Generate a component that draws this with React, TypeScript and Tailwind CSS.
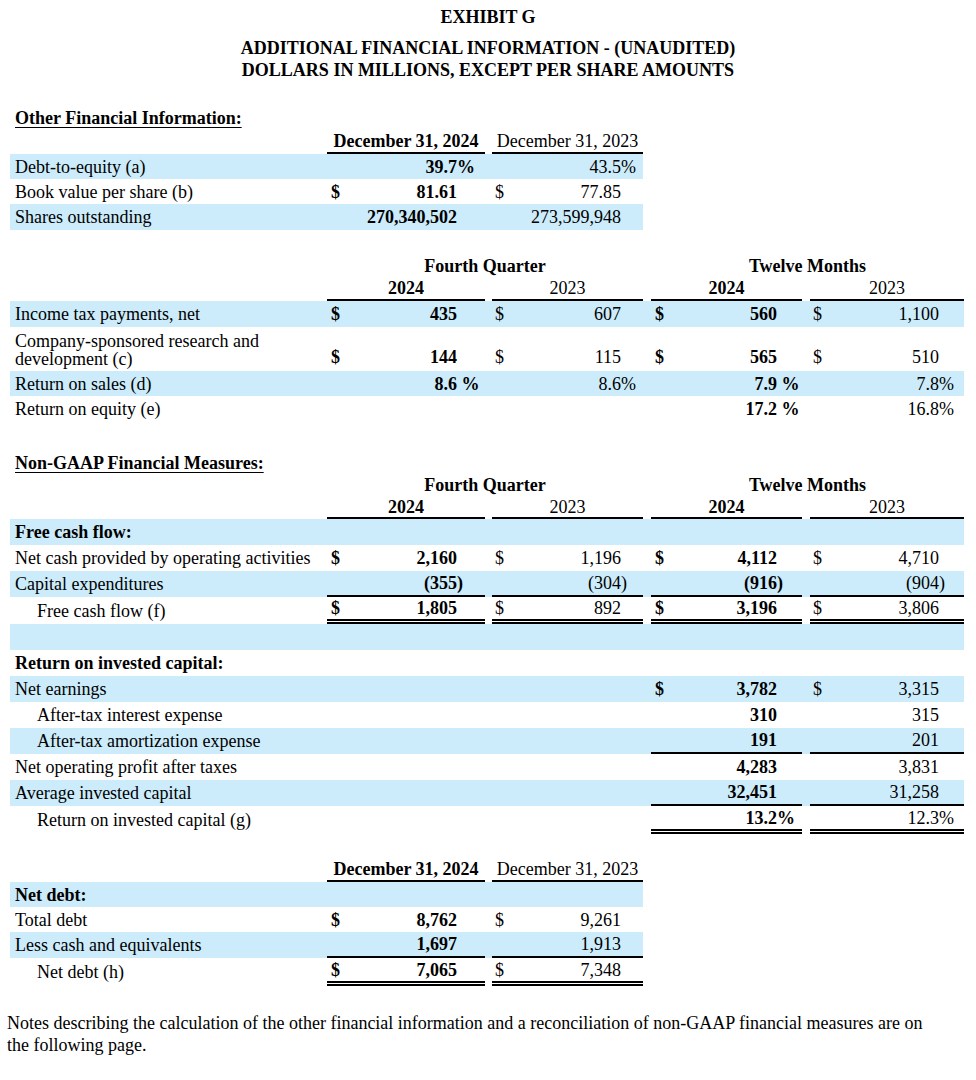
import React from "react";

type Cell = { d?: boolean; v?: string; pre?: string; suf?: string; line?: "s" | "d" } | null;

const BLUE = "bg-[#ccecfb]";
const COLW = ["w-[158px]", "w-[151px] ml-[7px]", "w-[151px] ml-[8px]", "w-[154px] ml-[8px]"];
const PR = ["pr-[28px]", "pr-[22px]", "pr-[25px]", "pr-[25px]"];
const PL = ["pl-[4px]", "pl-[3px]", "pl-[4px]", "pl-[3px]"];
const BOLD = [true, false, true, false];

function DataCell({ c, i, tall }: { c: Cell; i: number; tall?: boolean }) {
  const line =
    c?.line === "s"
      ? "border-b-2 border-black"
      : c?.line === "d"
      ? "border-b-[5px] border-double border-black"
      : "";
  return (
    <div
      className={`${COLW[i]} ${PL[i]} ${PR[i]} ${line} h-full flex ${tall ? "items-end pb-[3px]" : "items-center"} justify-between ${
        BOLD[i] ? "font-bold" : ""
      }`}
    >
      <span>{c?.d ? "$" : ""}</span>
      <span className="whitespace-nowrap">
        {c?.pre}
        {c?.v}
        <span className="inline-block w-0 whitespace-pre">{c?.suf}</span>
      </span>
    </div>
  );
}

function Row({
  label,
  cells,
  blue,
  h = "h-[26px]",
  indent,
  bold,
  wide = true,
  tall,
}: {
  label?: React.ReactNode;
  cells?: Cell[];
  blue?: boolean;
  h?: string;
  indent?: boolean;
  bold?: boolean;
  wide?: boolean;
  tall?: boolean;
}) {
  return (
    <div className={`flex ${h} ${blue ? BLUE : ""} ${wide ? "w-[954px]" : "w-[633px]"}`}>
      <div
        className={`w-[317px] shrink-0 flex ${tall ? "items-end pb-[3px] leading-[18px]" : "items-center"} ${
          indent ? "pl-[27px]" : "pl-[5px]"
        } ${bold ? "font-bold" : ""}`}
      >
        {label}
      </div>
      {cells && cells.map((c, i) => <DataCell key={i} c={c} i={i} tall={tall} />)}
    </div>
  );
}

function YearHeader({ labels, h = "h-[24px]" }: { labels: string[]; h?: string }) {
  return (
    <div className={`flex ${h}`}>
      <div className="w-[317px] shrink-0" />
      {labels.map((l, i) => (
        <div
          key={i}
          className={`${COLW[i]} border-b-2 border-black flex items-center justify-center whitespace-nowrap ${
            BOLD[i] ? "font-bold" : ""
          }`}
        >
          {l}
        </div>
      ))}
    </div>
  );
}

function GroupHeader() {
  return (
    <div className="flex h-[22px] items-center font-bold">
      <div className="w-[317px] shrink-0" />
      <div className="w-[316px] text-center">Fourth Quarter</div>
      <div className="w-[313px] ml-[8px] text-center">Twelve Months</div>
    </div>
  );
}

export default function App() {
  return (
    <div className="w-[976px] min-h-[1080px] bg-white text-black font-['Liberation_Serif','Times_New_Roman',serif] text-[18px] leading-[22px]">
      <div className="pt-[6px] text-center font-bold">
        <div>EXHIBIT G</div>
        <div className="mt-[9px]">ADDITIONAL FINANCIAL INFORMATION - (UNAUDITED)</div>
        <div>DOLLARS IN MILLIONS, EXCEPT PER SHARE AMOUNTS</div>
      </div>

      <div className="ml-[10px]">
        {/* Other Financial Information */}
        <div className="mt-[26px] pl-[5px] font-bold">
          <span className="underline underline-offset-[3px]">Other Financial Information:</span>
        </div>
        <YearHeader labels={["December 31, 2024", "December 31, 2023"]} h="h-[25px]" />
        <Row wide={false} blue h="h-[25px]" label="Debt-to-equity (a)" cells={[{ v: "39.7", suf: "%" }, { v: "43.5", suf: "%" }]} />
        <Row wide={false} h="h-[25px]" label="Book value per share (b)" cells={[{ d: true, v: "81.61" }, { d: true, v: "77.85" }]} />
        <Row wide={false} blue label="Shares outstanding" cells={[{ v: "270,340,502" }, { v: "273,599,948" }]} />

        {/* Second table */}
        <div className="mt-[25px]">
          <GroupHeader />
          <YearHeader labels={["2024", "2023", "2024", "2023"]} />
        </div>
        <Row
          blue
          label="Income tax payments, net"
          cells={[
            { d: true, v: "435" },
            { d: true, v: "607" },
            { d: true, v: "560" },
            { d: true, v: "1,100" },
          ]}
        />
        <Row
          tall
          h="h-[44px]"
          label={
            <span>
              Company-sponsored research and
              <br />
              development (c)
            </span>
          }
          cells={[
            { d: true, v: "144" },
            { d: true, v: "115" },
            { d: true, v: "565" },
            { d: true, v: "510" },
          ]}
        />
        <Row
          blue
          h="h-[25px]"
          label="Return on sales (d)"
          cells={[
            { v: "8.6", suf: " %" },
            { v: "8.6", suf: "%" },
            { v: "7.9", suf: " %" },
            { v: "7.8", suf: "%" },
          ]}
        />
        <Row
          h="h-[25px]"
          label="Return on equity (e)"
          cells={[null, null, { v: "17.2", suf: " %" }, { v: "16.8", suf: "%" }]}
        />

        {/* Non-GAAP */}
        <div className="mt-[31px] pl-[5px] font-bold">
          <span className="underline underline-offset-[3px]">Non-GAAP Financial Measures:</span>
        </div>
        <GroupHeader />
        <YearHeader labels={["2024", "2023", "2024", "2023"]} h="h-[23px]" />
        <Row blue bold label="Free cash flow:" />
        <Row
          label="Net cash provided by operating activities"
          cells={[
            { d: true, v: "2,160" },
            { d: true, v: "1,196" },
            { d: true, v: "4,112" },
            { d: true, v: "4,710" },
          ]}
        />
        <Row
          blue
          label="Capital expenditures"
          cells={[
            { pre: "(", v: "355", suf: ")", line: "s" },
            { pre: "(", v: "304", suf: ")", line: "s" },
            { pre: "(", v: "916", suf: ")", line: "s" },
            { pre: "(", v: "904", suf: ")", line: "s" },
          ]}
        />
        <Row
          indent
          h="h-[27px]"
          label="Free cash flow (f)"
          cells={[
            { d: true, v: "1,805", line: "d" },
            { d: true, v: "892", line: "d" },
            { d: true, v: "3,196", line: "d" },
            { d: true, v: "3,806", line: "d" },
          ]}
        />
        <Row blue />
        <Row bold label="Return on invested capital:" />
        <Row blue label="Net earnings" cells={[null, null, { d: true, v: "3,782" }, { d: true, v: "3,315" }]} />
        <Row indent label="After-tax interest expense" cells={[null, null, { v: "310" }, { v: "315" }]} />
        <Row
          blue
          indent
          label="After-tax amortization expense"
          cells={[null, null, { v: "191", line: "s" }, { v: "201", line: "s" }]}
        />
        <Row label="Net operating profit after taxes" cells={[null, null, { v: "4,283" }, { v: "3,831" }]} />
        <Row
          blue
          label="Average invested capital"
          cells={[null, null, { v: "32,451", line: "s" }, { v: "31,258", line: "s" }]}
        />
        <Row
          indent
          h="h-[28px]"
          label="Return on invested capital (g)"
          cells={[null, null, { v: "13.2", suf: "%", line: "d" }, { v: "12.3", suf: "%", line: "d" }]}
        />

        {/* Net debt */}
        <div className="mt-[23px]">
          <YearHeader labels={["December 31, 2024", "December 31, 2023"]} h="h-[25px]" />
        </div>
        <Row wide={false} blue bold h="h-[25px]" label="Net debt:" />
        <Row wide={false} h="h-[25px]" label="Total debt" cells={[{ d: true, v: "8,762" }, { d: true, v: "9,261" }]} />
        <Row
          wide={false}
          blue
          label="Less cash and equivalents"
          cells={[{ v: "1,697", line: "s" }, { v: "1,913", line: "s" }]}
        />
        <Row
          wide={false}
          indent
          h="h-[28px]"
          label="Net debt (h)"
          cells={[
            { d: true, v: "7,065", line: "d" },
            { d: true, v: "7,348", line: "d" },
          ]}
        />
      </div>

      <p className="mt-[26px] pl-[7px] w-[944px]">
        Notes describing the calculation of the other financial information and a reconciliation of non-GAAP financial
        measures are on the following page.
      </p>
    </div>
  );
}
